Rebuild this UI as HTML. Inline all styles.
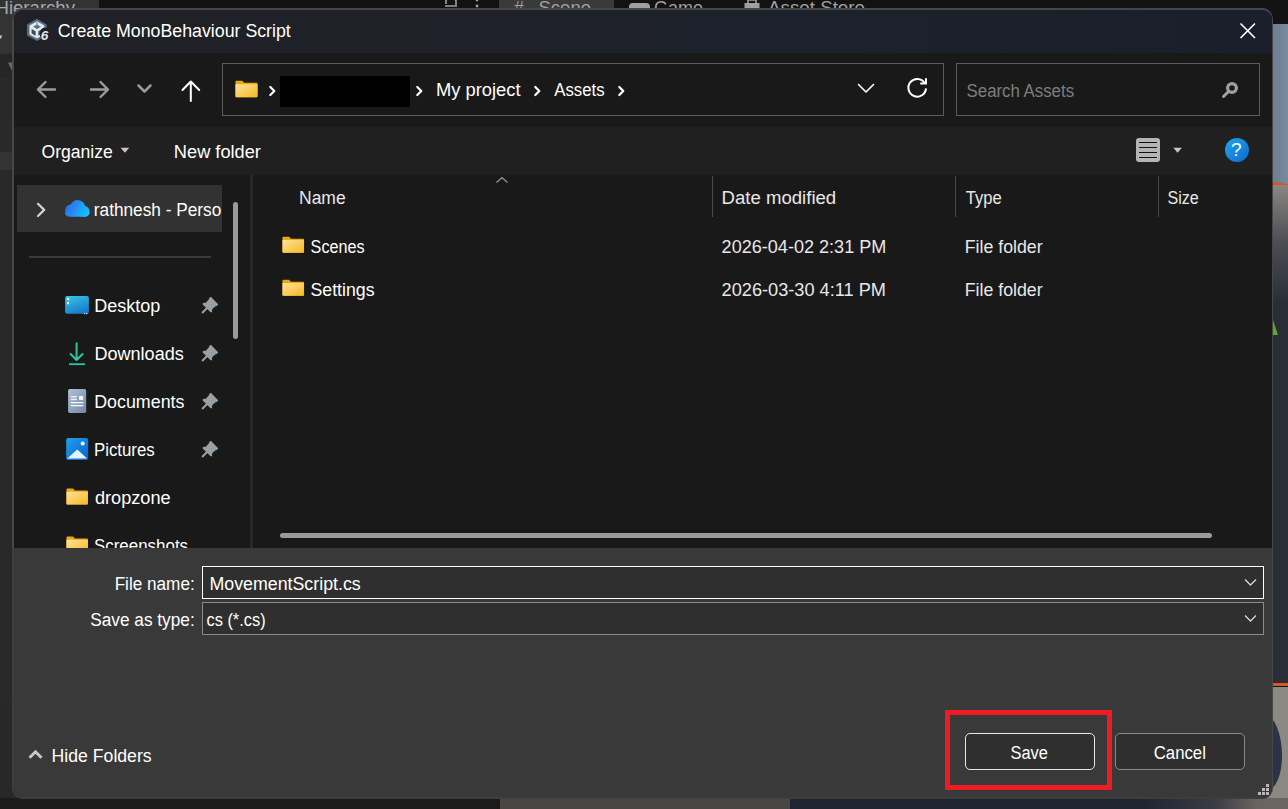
<!DOCTYPE html>
<html><head><meta charset="utf-8"><style>
html,body{margin:0;padding:0;width:1288px;height:809px;overflow:hidden;background:#121212;font-family:"Liberation Sans",sans-serif;}
.a{position:absolute}
.t{position:absolute;line-height:1;white-space:nowrap}
svg{overflow:visible}
</style></head><body>
<!-- background: unity editor -->
<div class="a" style="left:0;top:0;width:99px;height:60px;background:#333333"></div>
<div class="a" style="left:0;top:54px;width:13px;height:744px;background:#292929"></div>
<div class="a" style="left:0;top:54px;width:13px;height:24px;background:#262626"></div>
<svg class="a" style="left:0;top:30px" width="14" height="50"><path d="M-2 5.5 H2.5 L0.5 9 Z" fill="#c8c8c8"/><path d="M8 32.5 H13 V43 Z" fill="#6a6a6a"/></svg>
<div class="a" style="left:499px;top:0;width:115px;height:10px;background:#3a3a3a"></div>
<svg class="a" style="left:0;top:0" width="1288" height="20" font-family="Liberation Sans">
 <text x="-4.5" y="14" font-size="17.5" fill="#a8a8a8" textLength="79.5" lengthAdjust="spacingAndGlyphs">Hierarchy</text>
 <path d="M446 4 V1 Q446 -1 449 -1 H453 Q456 -1 456 1 V5 M445 6 H457" stroke="#a0a0a0" stroke-width="1.6" fill="none"/>
 <circle cx="477" cy="0" r="1.4" fill="#a0a0a0"/><circle cx="477" cy="6" r="1.4" fill="#a0a0a0"/>
 <text x="514" y="14" font-size="17.5" fill="#a0a0a0">#</text>
 <text x="538.5" y="14" font-size="17.5" fill="#a0a0a0" textLength="52.5" lengthAdjust="spacingAndGlyphs">Scene</text>
 <rect x="629" y="3" width="21" height="9" rx="4" fill="#a0a0a0"/>
 <text x="654" y="14" font-size="17.5" fill="#a0a0a0" textLength="49" lengthAdjust="spacingAndGlyphs">Game</text>
 <rect x="744.5" y="3" width="15" height="9" fill="#a0a0a0"/><path d="M748 3 V0 H756 V3" stroke="#a0a0a0" stroke-width="1.6" fill="none"/>
 <text x="768" y="14" font-size="17.5" fill="#a0a0a0" textLength="97" lengthAdjust="spacingAndGlyphs">Asset Store</text>
</svg>
<div class="a" style="left:0;top:152px;width:13px;height:18px;background:#333333"></div>
<div class="a" style="left:1250px;top:24px;width:38px;height:160px;background:linear-gradient(90deg,#5a6a80,#7a8a9e)"></div>
<div class="a" style="left:1273px;top:182.5px;width:15px;height:2.5px;background:#d8581c;transform:rotate(10deg)"></div>
<div class="a" style="left:1250px;top:185px;width:38px;height:120px;background:linear-gradient(#8a8580,#4a4c52 50%,#282d36)"></div>
<div class="a" style="left:1250px;top:305px;width:38px;height:380px;background:#282d36"></div>
<div class="a" style="left:1273px;top:320px;width:0;height:0;border-left:5px solid #5aa82a;border-top:15px solid transparent"></div>
<div class="a" style="left:1273px;top:683px;width:15px;height:3px;background:#d8581c"></div>
<div class="a" style="left:1250px;top:687px;width:38px;height:122px;background:#8c8884"></div>
<div class="a" style="left:0;top:700px;width:30px;height:98px;background:#282828"></div>
<div class="a" style="left:0;top:798px;width:500px;height:11px;background:#1b1b1b"></div>
<div class="a" style="left:500px;top:798px;width:290px;height:11px;background:#4a4644;border-top:1px solid #6a6664"></div>
<div class="a" style="left:790px;top:798px;width:350px;height:11px;background:#1e2430"></div>
<div class="a" style="left:1140px;top:798px;width:148px;height:11px;background:linear-gradient(90deg,#1e2430,#3a3c44 50%,#6a6560 80%)"></div>

<div class="a" style="left:1250px;top:715px;width:32px;height:75px;background:#2a3348;border-radius:0 60% 50% 0"></div>
<!-- dialog -->
<div class="a" id="dlg" style="left:12px;top:8px;width:1258px;height:787px;border:2px solid #474747;border-right-width:1px;border-bottom-color:#3d3d3d;border-left-color:#3d3d3d;border-radius:11px;overflow:hidden;background:#191919">
 <div class="a" style="left:0;top:0;width:1258px;height:43px;background:linear-gradient(90deg,#202126,#1d212b 60%,#1b1f2b)"></div>
 <div class="a" style="left:0;top:117px;width:1258px;height:48px;background:#202020"></div>
 <div class="a" style="left:0;top:538px;width:1258px;height:254px;background:#393939"></div>
</div>
<div class="a" style="left:12px;top:20px;width:2px;height:528px;background:#474747"></div>
<!-- title icon -->
<svg class="a" style="left:24px;top:16px" width="28" height="28" viewBox="0 0 28 28">
 <path d="M13 2.8 L22.8 8.5 V19.5 L13 25 L2.9 19.5 V8.5 Z" fill="#56687a"/>
 <path d="M13 5.3 L20.4 9.6 V18.4 L13 22.6 L5.4 18.4 V9.6 Z" fill="#dfe7ee"/>
 <path d="M13 8.6 L16.8 10.8 L13 13 L9.2 10.8 Z" fill="#5d6e7d"/>
 <path d="M7.6 13 L11.6 15.3 V19.8 L7.6 17.5 Z" fill="#3c4b58"/>
 <path d="M14.4 15.3 L18.4 13 V17.5 L14.4 19.8 Z" fill="#3c4b58"/>
 <rect x="12.3" y="6" width="1.4" height="3" fill="#8e9ca8"/>
 <ellipse cx="20.8" cy="18" rx="5" ry="6.5" fill="#1d1f24"/>
 <text x="20.6" y="23.6" font-size="13.5" font-weight="bold" font-style="italic" text-anchor="middle" fill="#e4e8ec" font-family="Liberation Sans">6</text>
</svg>
<!-- close X -->
<svg class="a" style="left:1239px;top:22px" width="18" height="18" viewBox="0 0 18 18"><path d="M1.5 1.5 L16 16 M16 1.5 L1.5 16" stroke="#ffffff" stroke-width="1.6"/></svg>
<!-- nav arrows -->
<svg class="a" style="left:36px;top:80px" width="20" height="20" viewBox="0 0 20 20"><path d="M19 9.5 H2 M9.5 2 L2 9.5 L9.5 17" stroke="#9c9c9c" stroke-width="2.4" fill="none" stroke-linecap="round" stroke-linejoin="round"/></svg>
<svg class="a" style="left:90px;top:80px" width="20" height="20" viewBox="0 0 20 20"><path d="M1 9.5 H18 M10.5 2 L18 9.5 L10.5 17" stroke="#9c9c9c" stroke-width="2.4" fill="none" stroke-linecap="round" stroke-linejoin="round"/></svg>
<svg class="a" style="left:137px;top:84px" width="16" height="10" viewBox="0 0 16 10"><path d="M1.5 1.5 L7.5 7.5 L13.5 1.5" stroke="#9c9c9c" stroke-width="2.5" fill="none" stroke-linecap="round" stroke-linejoin="round"/></svg>
<svg class="a" style="left:181px;top:80px" width="20" height="22" viewBox="0 0 20 22"><path d="M9.8 21 V2 M1.5 10 L9.8 1.5 L18.2 10" stroke="#ffffff" stroke-width="2" fill="none" stroke-linecap="round" stroke-linejoin="round"/></svg>
<!-- address box -->
<div class="a" style="left:222px;top:63px;width:720px;height:51px;border:1px solid #5c5c5c"></div>
<svg width="23" height="18" viewBox="0 0 24 18" style="position:absolute;left:234.6px;top:79.5px"><defs><linearGradient id="fg1" x1="0" y1="0" x2="1" y2="1"><stop offset="0" stop-color="#ffe39a"/><stop offset="1" stop-color="#f5b822"/></linearGradient></defs><path d="M0.5 1.5 Q0.5 0.5 1.5 0.5 H7.5 L9.5 2.5 H22.5 Q23.5 2.5 23.5 3.5 V16.5 Q23.5 17.5 22.5 17.5 H1.5 Q0.5 17.5 0.5 16.5 Z" fill="#e9a818"/><path d="M0.5 4 H23.5 V16.5 Q23.5 17.5 22.5 17.5 H1.5 Q0.5 17.5 0.5 16.5 Z" fill="url(#fg1)"/></svg>
<svg class="a" style="left:268px;top:85px" width="10" height="12" viewBox="0 0 10 12"><path d="M2.3 2 L6.3 6 L2.3 10" stroke="#ffffff" stroke-width="2.2" fill="none" stroke-linecap="round" stroke-linejoin="round"/></svg>
<div class="a" style="left:280px;top:76px;width:130px;height:31px;background:#000"></div>
<svg class="a" style="left:415px;top:85px" width="10" height="12" viewBox="0 0 10 12"><path d="M2.3 2 L6.3 6 L2.3 10" stroke="#ffffff" stroke-width="2.2" fill="none" stroke-linecap="round" stroke-linejoin="round"/></svg>
<svg class="a" style="left:533px;top:85px" width="10" height="12" viewBox="0 0 10 12"><path d="M2.3 2 L6.3 6 L2.3 10" stroke="#ffffff" stroke-width="2.2" fill="none" stroke-linecap="round" stroke-linejoin="round"/></svg>
<svg class="a" style="left:617px;top:85px" width="10" height="12" viewBox="0 0 10 12"><path d="M2.3 2 L6.3 6 L2.3 10" stroke="#ffffff" stroke-width="2.2" fill="none" stroke-linecap="round" stroke-linejoin="round"/></svg>
<svg class="a" style="left:857px;top:83px" width="18" height="11" viewBox="0 0 18 11"><path d="M1.5 1.5 L9 9 L16.5 1.5" stroke="#ffffff" stroke-width="1.6" fill="none" stroke-linecap="round" stroke-linejoin="round"/></svg>
<svg class="a" style="left:905px;top:76px" width="24" height="24" viewBox="0 0 24 24"><path d="M21.0 12.4 A8.8 8.8 0 1 1 19.6 7.0" stroke="#ffffff" stroke-width="2" fill="none"/><path d="M21 2.2 V7.6 H15.2" stroke="#ffffff" stroke-width="2" fill="none"/></svg>
<!-- search box -->
<div class="a" style="left:956px;top:63px;width:302px;height:51px;border:1px solid #5c5c5c"></div>
<svg class="a" style="left:1220px;top:80px" width="20" height="20" viewBox="0 0 20 20"><circle cx="12" cy="8" r="4.4" stroke="#a0a0a0" stroke-width="3.2" fill="none"/><path d="M8.5 11.5 L3.5 16.5" stroke="#a0a0a0" stroke-width="3" stroke-linecap="round"/></svg>
<!-- command bar -->
<svg class="a" style="left:120px;top:147px" width="10" height="7" viewBox="0 0 10 7"><path d="M0.5 0.8 H9.3 L4.9 5.8 Z" fill="#c4c4c4"/></svg>
<div class="a" style="left:1136px;top:138px;width:24px;height:24px;border-radius:3px;background:#b4b4b4"></div>
<div class="a" style="left:1139px;top:141.5px;width:18px;height:1.6px;background:#111"></div>
<div class="a" style="left:1139px;top:146.6px;width:18px;height:1.6px;background:#111"></div>
<div class="a" style="left:1139px;top:151.7px;width:18px;height:1.6px;background:#111"></div>
<div class="a" style="left:1139px;top:156.8px;width:18px;height:1.6px;background:#111"></div>
<svg class="a" style="left:1173px;top:147px" width="10" height="7" viewBox="0 0 10 7"><path d="M0.3 0.8 H8.9 L4.6 5.8 Z" fill="#c8c8c8"/></svg>
<div class="a" style="left:1225px;top:138px;width:24px;height:24px;border-radius:50%;background:linear-gradient(135deg,#22a4ee,#0a6cd0)"></div>
<div class="t" style="left:1231px;top:140px;font-size:19px;color:#fff">?</div>
<!-- nav pane -->
<div class="a" style="left:13px;top:175px;width:237px;height:373px;overflow:hidden">
 <div class="a" style="left:4px;top:10px;width:205px;height:47px;background:#323232"></div>
 <svg class="a" style="left:22.5px;top:26.5px" width="10" height="16" viewBox="0 0 10 16"><path d="M2 1.8 L8.2 7.9 L2 14" stroke="#d4d4d4" stroke-width="2.2" fill="none" stroke-linecap="round" stroke-linejoin="round"/></svg>
 <svg class="a" style="left:47px;top:20px" width="34" height="27" viewBox="0 0 34 27"><defs><linearGradient id="cl" gradientUnits="userSpaceOnUse" x1="5" y1="8" x2="29" y2="20"><stop offset="0" stop-color="#1d4fd6"/><stop offset="0.22" stop-color="#2a7cec"/><stop offset="0.5" stop-color="#2a8ef2"/><stop offset="0.56" stop-color="#1c9ef6"/><stop offset="1" stop-color="#14c4fa"/></linearGradient></defs><g fill="url(#cl)"><circle cx="10.6" cy="15.2" r="5.6"/><circle cx="17.6" cy="12.6" r="7.6"/><circle cx="24" cy="16.3" r="5.5"/><rect x="5" y="15" width="24.5" height="6.7" rx="5"/></g></svg>
 <div class="a" style="left:16px;top:81px;width:182px;height:2px;background:#3a3a3a"></div>
 <div class="a" style="left:220px;top:27px;width:5px;height:137px;border-radius:3px;background:#9a9a9a"></div>
 <svg class="a" style="left:52px;top:121px" width="24" height="19" viewBox="0 0 24 19"><defs><linearGradient id="dk" x1="0" y1="0" x2="0.5" y2="1"><stop offset="0" stop-color="#36cbe4"/><stop offset="1" stop-color="#1a7ccc"/></linearGradient></defs><rect x="0.1" y="0" width="23.8" height="17.8" rx="2" fill="url(#dk)"/><rect x="2" y="2.1" width="2.1" height="2.1" fill="#f0fbff"/><rect x="2" y="6.1" width="2.1" height="2.1" fill="#f0fbff"/><rect x="19" y="17" width="1.2" height="1.2" fill="#b8e8f8"/><rect x="21.2" y="17" width="1.2" height="1.2" fill="#b8e8f8"/></svg>
 <svg class="a" style="left:55px;top:167px" width="18" height="24" viewBox="0 0 18 24"><path d="M8.6 1.2 V18 M2.6 12 L8.6 18 L14.6 12" stroke="#2fc4a2" stroke-width="2" fill="none" stroke-linecap="round" stroke-linejoin="round"/><path d="M1 22.2 H17" stroke="#2fc4a2" stroke-width="1.8"/></svg>
 <svg class="a" style="left:55px;top:213px" width="19" height="26" viewBox="0 0 19 26"><defs><linearGradient id="dc" x1="0" y1="0" x2="1" y2="1"><stop offset="0" stop-color="#b2c2d4"/><stop offset="1" stop-color="#6f88a2"/></linearGradient></defs><rect x="0.1" y="1" width="18.1" height="24" rx="1.8" fill="url(#dc)"/><g fill="#f2f6fa"><rect x="2.9" y="8.1" width="5.9" height="1.3"/><rect x="2.9" y="10.8" width="5.9" height="1.3"/><rect x="11.1" y="8" width="4" height="3.9"/><rect x="2.9" y="14" width="12.4" height="1.3"/><rect x="2.9" y="17" width="12.4" height="1.3"/></g></svg>
 <svg class="a" style="left:52.8px;top:263px" width="22.4" height="22" viewBox="0 0 22 22"><defs><linearGradient id="pc" x1="0" y1="0" x2="1" y2="1"><stop offset="0" stop-color="#1ea0ee"/><stop offset="1" stop-color="#0a62c8"/></linearGradient></defs><rect x="0" y="0" width="22" height="22" rx="2" fill="url(#pc)"/><path d="M1 20.5 L11 11.5 L21 20.5 Z" fill="#e8f4fc"/><circle cx="16.5" cy="5.5" r="2" fill="#f0f8ff"/></svg>
 <svg width="22.4" height="17" viewBox="0 0 24 18" style="position:absolute;left:52.8px;top:313px"><defs><linearGradient id="fg2" x1="0" y1="0" x2="1" y2="1"><stop offset="0" stop-color="#ffe39a"/><stop offset="1" stop-color="#f5b822"/></linearGradient></defs><path d="M0.5 1.5 Q0.5 0.5 1.5 0.5 H7.5 L9.5 2.5 H22.5 Q23.5 2.5 23.5 3.5 V16.5 Q23.5 17.5 22.5 17.5 H1.5 Q0.5 17.5 0.5 16.5 Z" fill="#e9a818"/><path d="M0.5 4 H23.5 V16.5 Q23.5 17.5 22.5 17.5 H1.5 Q0.5 17.5 0.5 16.5 Z" fill="url(#fg2)"/></svg>
 <svg width="22.4" height="17" viewBox="0 0 24 18" style="position:absolute;left:52.8px;top:361px"><defs><linearGradient id="fg3" x1="0" y1="0" x2="1" y2="1"><stop offset="0" stop-color="#ffe39a"/><stop offset="1" stop-color="#f5b822"/></linearGradient></defs><path d="M0.5 1.5 Q0.5 0.5 1.5 0.5 H7.5 L9.5 2.5 H22.5 Q23.5 2.5 23.5 3.5 V16.5 Q23.5 17.5 22.5 17.5 H1.5 Q0.5 17.5 0.5 16.5 Z" fill="#e9a818"/><path d="M0.5 4 H23.5 V16.5 Q23.5 17.5 22.5 17.5 H1.5 Q0.5 17.5 0.5 16.5 Z" fill="url(#fg3)"/></svg>
 <svg class="a" style="left:187.8px;top:122px" width="17" height="17" viewBox="0 0 16 16"><path d="M9 1 L15 7 L13 8 L9.5 11 L9.5 13.5 L2.5 6.5 L5 6.5 L8 3 Z M5.5 10.5 L1 15" stroke="#98a0a6" stroke-width="2" fill="#98a0a6" stroke-linejoin="round"/></svg>
 <svg class="a" style="left:187.8px;top:170px" width="17" height="17" viewBox="0 0 16 16"><path d="M9 1 L15 7 L13 8 L9.5 11 L9.5 13.5 L2.5 6.5 L5 6.5 L8 3 Z M5.5 10.5 L1 15" stroke="#98a0a6" stroke-width="2" fill="#98a0a6" stroke-linejoin="round"/></svg>
 <svg class="a" style="left:187.8px;top:218px" width="17" height="17" viewBox="0 0 16 16"><path d="M9 1 L15 7 L13 8 L9.5 11 L9.5 13.5 L2.5 6.5 L5 6.5 L8 3 Z M5.5 10.5 L1 15" stroke="#98a0a6" stroke-width="2" fill="#98a0a6" stroke-linejoin="round"/></svg>
 <svg class="a" style="left:187.8px;top:266px" width="17" height="17" viewBox="0 0 16 16"><path d="M9 1 L15 7 L13 8 L9.5 11 L9.5 13.5 L2.5 6.5 L5 6.5 L8 3 Z M5.5 10.5 L1 15" stroke="#98a0a6" stroke-width="2" fill="#98a0a6" stroke-linejoin="round"/></svg>
</div>
<div class="a" style="left:250px;top:175px;width:3px;height:373px;background:#282828"></div>
<!-- content -->
<svg class="a" style="left:495px;top:176px" width="14" height="8" viewBox="0 0 14 8"><path d="M1.5 6.5 L7 1.5 L12.5 6.5" stroke="#9a9a9a" stroke-width="1.2" fill="none"/></svg>
<div class="a" style="left:712px;top:176px;width:1px;height:41px;background:#4a4a4a"></div>
<div class="a" style="left:955px;top:176px;width:1px;height:41px;background:#4a4a4a"></div>
<div class="a" style="left:1158px;top:176px;width:1px;height:41px;background:#4a4a4a"></div>
<svg width="22.5" height="17.5" viewBox="0 0 24 18" style="position:absolute;left:281.7px;top:236px"><defs><linearGradient id="fg4" x1="0" y1="0" x2="1" y2="1"><stop offset="0" stop-color="#ffe39a"/><stop offset="1" stop-color="#f5b822"/></linearGradient></defs><path d="M0.5 1.5 Q0.5 0.5 1.5 0.5 H7.5 L9.5 2.5 H22.5 Q23.5 2.5 23.5 3.5 V16.5 Q23.5 17.5 22.5 17.5 H1.5 Q0.5 17.5 0.5 16.5 Z" fill="#e9a818"/><path d="M0.5 4 H23.5 V16.5 Q23.5 17.5 22.5 17.5 H1.5 Q0.5 17.5 0.5 16.5 Z" fill="url(#fg4)"/></svg>
<svg width="22.5" height="17.5" viewBox="0 0 24 18" style="position:absolute;left:281.7px;top:279px"><defs><linearGradient id="fg5" x1="0" y1="0" x2="1" y2="1"><stop offset="0" stop-color="#ffe39a"/><stop offset="1" stop-color="#f5b822"/></linearGradient></defs><path d="M0.5 1.5 Q0.5 0.5 1.5 0.5 H7.5 L9.5 2.5 H22.5 Q23.5 2.5 23.5 3.5 V16.5 Q23.5 17.5 22.5 17.5 H1.5 Q0.5 17.5 0.5 16.5 Z" fill="#e9a818"/><path d="M0.5 4 H23.5 V16.5 Q23.5 17.5 22.5 17.5 H1.5 Q0.5 17.5 0.5 16.5 Z" fill="url(#fg5)"/></svg>
<div class="a" style="left:280px;top:533px;width:932px;height:5px;border-radius:3px;background:#9a9a9a"></div>
<!-- bottom panel -->
<div class="a" style="left:202px;top:566px;width:1060px;height:31px;border:1px solid #ffffff;background:#2f2f2f"></div>
<svg class="a" style="left:1244px;top:578px" width="13" height="9" viewBox="0 0 13 9"><path d="M1 1.5 L6.5 7 L12 1.5" stroke="#d8d8d8" stroke-width="1.3" fill="none"/></svg>
<div class="a" style="left:202px;top:602px;width:1060px;height:31px;border:1px solid #8a8a8a;background:#2f2f2f"></div>
<svg class="a" style="left:1244px;top:614px" width="13" height="9" viewBox="0 0 13 9"><path d="M1 1.5 L6.5 7 L12 1.5" stroke="#d8d8d8" stroke-width="1.3" fill="none"/></svg>
<svg class="a" style="left:27px;top:748px" width="17" height="12" viewBox="0 0 17 12"><path d="M2.5 9.8 L8.5 3.8 L14.5 9.8" stroke="#c8c8c8" stroke-width="3" fill="none"/></svg>
<div class="a" style="left:965px;top:733px;width:128px;height:35px;border:1px solid #e8e8e8;border-radius:5px;background:#2f2f2f"></div>
<div class="a" style="left:1115px;top:733px;width:128px;height:35px;border:1px solid #8a8a8a;border-radius:5px;background:#2f2f2f"></div>
<div class="a" style="left:945px;top:710px;width:157px;height:70px;border:5px solid #ed1c24"></div>
<svg class="a" style="left:1257px;top:783px" width="14" height="14" viewBox="0 0 14 14" fill="#b8b8b8"><rect x="9" y="1" width="3" height="3"/><rect x="5" y="5" width="3" height="3"/><rect x="9" y="5" width="3" height="3"/><rect x="1" y="9" width="3" height="3"/><rect x="5" y="9" width="3" height="3"/><rect x="9" y="9" width="3" height="3"/></svg>
<svg class="a" style="left:0;top:0" width="1288" height="809" font-family="Liberation Sans"><defs><clipPath id="navsel"><rect x="17" y="185" width="205" height="47"/></clipPath><clipPath id="navpane"><rect x="13" y="175" width="237" height="373"/></clipPath></defs><text x="57.71" y="37" font-size="18" fill="#ffffff" textLength="233.11" lengthAdjust="spacingAndGlyphs">Create MonoBehaviour Script</text><text x="435.98" y="96" font-size="18" fill="#ffffff" textLength="84.55" lengthAdjust="spacingAndGlyphs">My project</text><text x="554.30" y="96" font-size="18" fill="#ffffff" textLength="50.23" lengthAdjust="spacingAndGlyphs">Assets</text><text x="966.57" y="97" font-size="18" fill="#7e7e7e" textLength="107.49" lengthAdjust="spacingAndGlyphs">Search Assets</text><text x="41.52" y="158" font-size="18" fill="#ffffff" textLength="71.32" lengthAdjust="spacingAndGlyphs">Organize</text><text x="173.89" y="158" font-size="18" fill="#ffffff" textLength="87.06" lengthAdjust="spacingAndGlyphs">New folder</text><text x="93.84" y="216" font-size="18" fill="#ffffff" textLength="127.43" lengthAdjust="spacingAndGlyphs" clip-path="url(#navsel)">rathnesh - Perso</text><text x="94.20" y="312" font-size="18" fill="#ffffff" textLength="66.05" lengthAdjust="spacingAndGlyphs">Desktop</text><text x="94.40" y="360" font-size="18" fill="#ffffff" textLength="89.37" lengthAdjust="spacingAndGlyphs">Downloads</text><text x="94.21" y="408" font-size="18" fill="#ffffff" textLength="90.24" lengthAdjust="spacingAndGlyphs">Documents</text><text x="93.97" y="456" font-size="18" fill="#ffffff" textLength="60.76" lengthAdjust="spacingAndGlyphs">Pictures</text><text x="94.90" y="504" font-size="18" fill="#ffffff" textLength="75.76" lengthAdjust="spacingAndGlyphs">dropzone</text><text x="93.96" y="552" font-size="18" fill="#ffffff" textLength="94.10" lengthAdjust="spacingAndGlyphs" clip-path="url(#navpane)">Screenshots</text><text x="299.03" y="204" font-size="18" fill="#e8e8e8" textLength="46.59" lengthAdjust="spacingAndGlyphs">Name</text><text x="721.57" y="204" font-size="18" fill="#e8e8e8" textLength="114.63" lengthAdjust="spacingAndGlyphs">Date modified</text><text x="965.70" y="204" font-size="18" fill="#e8e8e8" textLength="36.03" lengthAdjust="spacingAndGlyphs">Type</text><text x="1167.51" y="204" font-size="18" fill="#e8e8e8" textLength="31.31" lengthAdjust="spacingAndGlyphs">Size</text><text x="310.60" y="253" font-size="18" fill="#ffffff" textLength="53.94" lengthAdjust="spacingAndGlyphs">Scenes</text><text x="310.52" y="296" font-size="18" fill="#ffffff" textLength="64.03" lengthAdjust="spacingAndGlyphs">Settings</text><text x="721.60" y="253" font-size="18" fill="#e8e8e8" textLength="164.72" lengthAdjust="spacingAndGlyphs">2026-04-02 2:31 PM</text><text x="721.59" y="296" font-size="18" fill="#e8e8e8" textLength="164.40" lengthAdjust="spacingAndGlyphs">2026-03-30 4:11 PM</text><text x="964.71" y="253" font-size="18" fill="#e8e8e8" textLength="77.92" lengthAdjust="spacingAndGlyphs">File folder</text><text x="964.71" y="296" font-size="18" fill="#e8e8e8" textLength="77.92" lengthAdjust="spacingAndGlyphs">File folder</text><text x="114.65" y="590" font-size="18" fill="#ffffff" textLength="80.05" lengthAdjust="spacingAndGlyphs">File name:</text><text x="209.41" y="590" font-size="18" fill="#ffffff" textLength="151.34" lengthAdjust="spacingAndGlyphs">MovementScript.cs</text><text x="90.24" y="626" font-size="18" fill="#ffffff" textLength="104.49" lengthAdjust="spacingAndGlyphs">Save as type:</text><text x="206.50" y="626" font-size="18" fill="#ffffff" textLength="59.11" lengthAdjust="spacingAndGlyphs">cs (*.cs)</text><text x="51.62" y="762" font-size="18" fill="#ffffff" textLength="100.03" lengthAdjust="spacingAndGlyphs">Hide Folders</text><text x="1010.49" y="759" font-size="18" fill="#ffffff" textLength="37.34" lengthAdjust="spacingAndGlyphs">Save</text><text x="1153.77" y="759" font-size="18" fill="#ffffff" textLength="52.09" lengthAdjust="spacingAndGlyphs">Cancel</text></svg>
</body></html>
